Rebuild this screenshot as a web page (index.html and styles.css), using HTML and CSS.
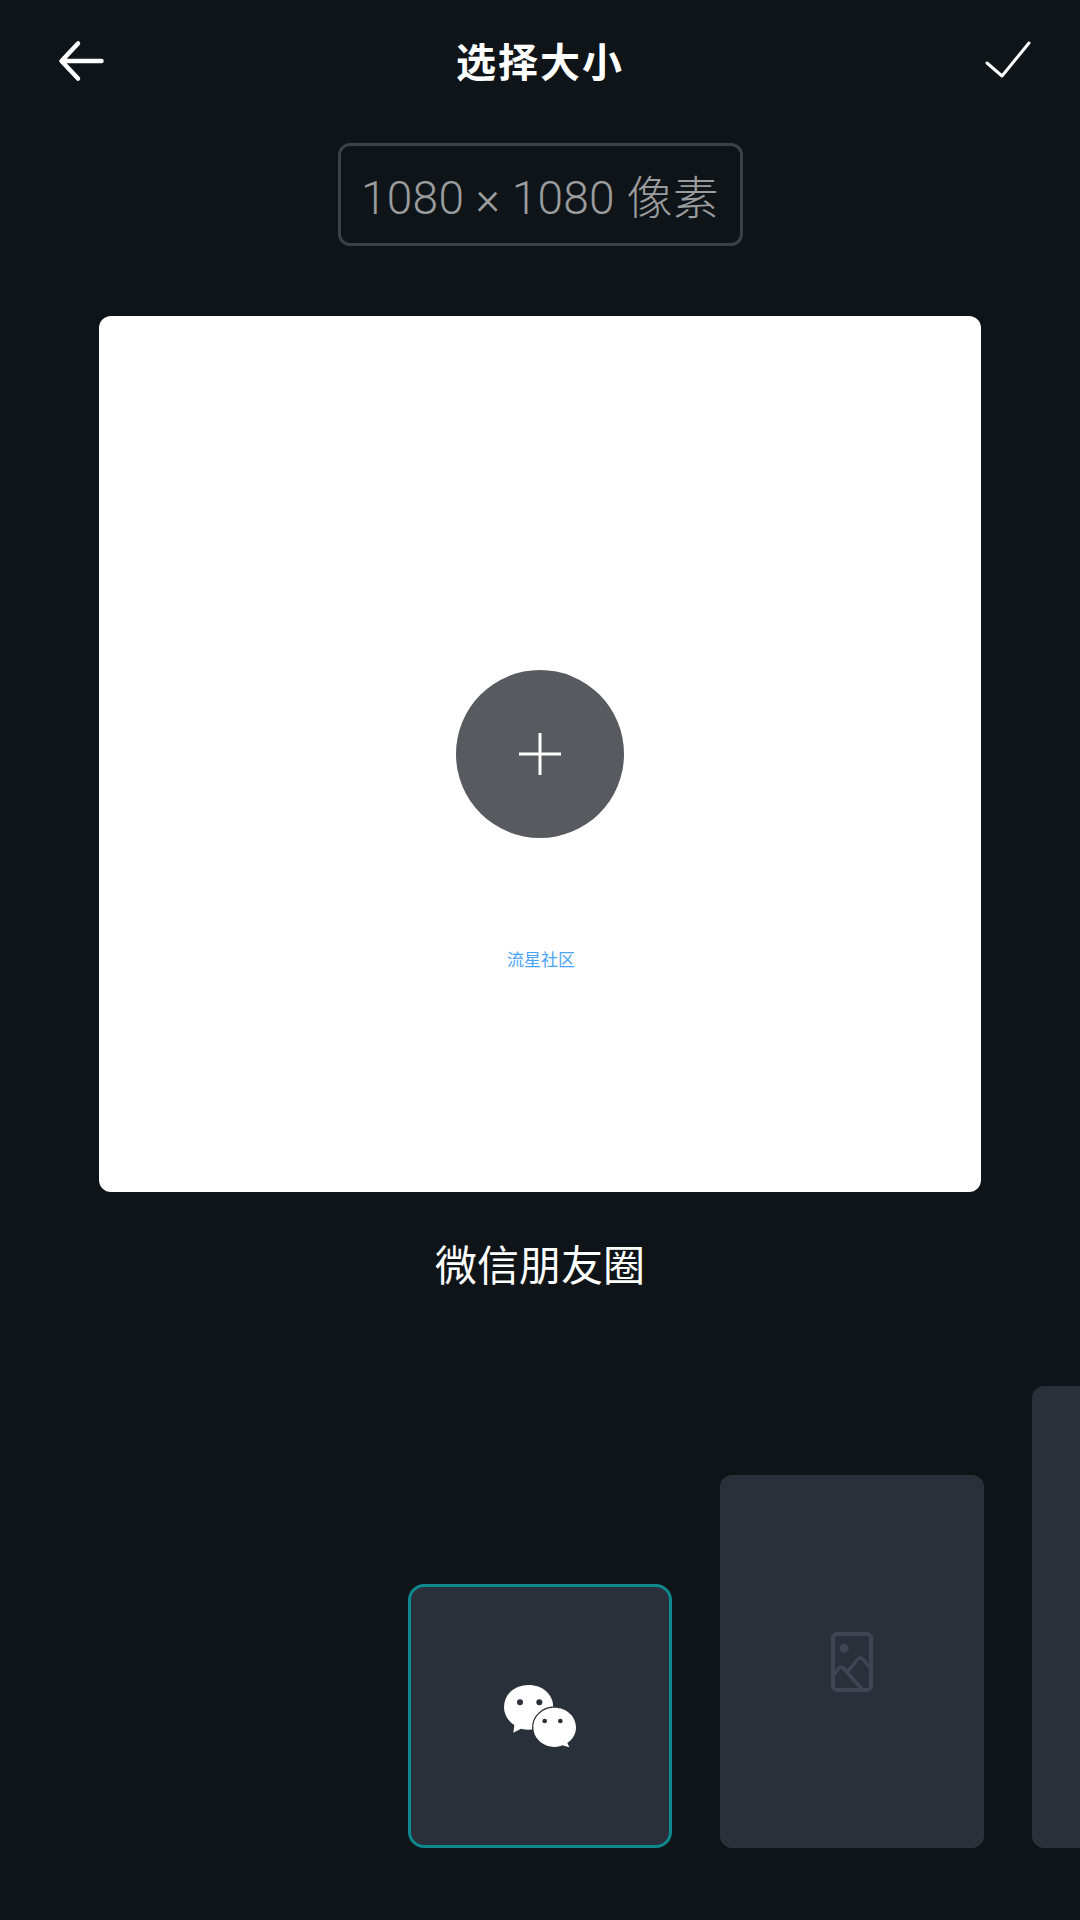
FILE: index.html
```html
<!DOCTYPE html>
<html lang="zh-CN">
<head>
  <meta charset="UTF-8">
  <meta name="viewport" content="width=device-width, initial-scale=1.0">
  <title>选择大小</title>
  <link rel="stylesheet" href="styles.css">
</head>
<body>
  <header class="top-bar">
    <svg class="top-icon back-icon" viewBox="0 0 48 48">
      <path d="M43.500 23H4M20 5.500L3.500 23L20 40.500" />
    </svg>
    <h1 class="title">选择大小</h1>
    <svg class="top-icon done-icon" viewBox="0 0 48 48">
      <path d="M3 25L18 38L45 5" />
    </svg>
  </header>

  <div class="size-box">1080 × 1080 像素</div>

  <div class="canvas">
    <div class="add-btn">
      <svg class="plus-icon" viewBox="0 0 42 42">
        <path d="M0 21H42M21 0V42" />
      </svg>
    </div>
    <div class="watermark">流星社区</div>
  </div>

  <div class="ratio-name">微信朋友圈</div>

  <!-- 尺寸列表 -->
  <div class="ratio-list">
    <div class="ratio-item square selected">
      <svg class="wechat-icon" viewBox="0 3 300 270">
        <path class="bubble" d="M42 112C42 72 75 45 116 45C157 45 190 72 190 112C190 152 157 179 116 179C108 179 100 178 93 176L70 188L73 165C54 153 42 134 42 112Z" />
        <circle class="eye" cx="90" cy="97" r="9" />
        <circle class="eye" cx="148" cy="97" r="9" />
        <path class="bubble front" d="M130 172C130 139 159 113 194 113C229 113 258 139 258 172C258 192 248 209 232 219L238 232L217 226C210 229 202 231 194 231C159 231 130 205 130 172Z" />
        <circle class="eye" cx="164" cy="153" r="7" />
        <circle class="eye" cx="211" cy="153" r="7" />
      </svg>
    </div>
    <div class="ratio-item portrait">
      <svg class="image-icon" viewBox="0 0 42 60">
        <rect x="2" y="2" width="38" height="56" rx="4" />
        <circle cx="13.300" cy="16.300" r="4.500" />
        <path d="M3.500 42L8 36Q10 34 12 36L30.500 56.500M17.300 38.700L27 27Q29.500 24.500 32 27L39.700 36.300" />
      </svg>
    </div>
    <div class="ratio-item tall"></div>
  </div>
</body>
</html>
```

FILE: styles.css
```css
* {
  box-sizing: border-box;
}
body {
  margin: 0;
  width: 1080px;
  height: 1920px;
  overflow: hidden;
  background-color: #0e1418;
  font-family: "Noto Sans CJK SC", sans-serif;
  display: flex;
  flex-direction: column;
  align-items: center;
}

/* top bar */
.top-bar {
  width: 100%;
  height: 124px;
  padding: 0 48px;
  display: grid;
  grid-template-columns: 1fr auto 1fr;
  align-items: center;
}
.top-icon {
  width: 48px;
  height: 48px;
  fill: none;
  stroke: #fff;
  stroke-linecap: round;
  stroke-linejoin: round;
}
.back-icon {
  margin-left: 10px;
  stroke-width: 4.5;
}
.done-icon {
  stroke-width: 3;
  justify-self: end;
}
.title {
  margin: 0 0 4px;
  color: #fff;
  font-size: 40px;
  font-weight: 700;
  letter-spacing: 2px;
  line-height: 1;
}

.size-box {
  margin-top: 19px;
  width: 405px;
  height: 103px;
  padding-bottom: 2px;
  border: 3px solid #3d4145;
  border-radius: 12px;
  display: flex;
  justify-content: center;
  align-items: center;
  color: #9a9c9e;
  font-family: Roboto, "Noto Sans CJK SC", sans-serif;
  font-size: 46px;
  font-weight: 300;
  letter-spacing: 0.300px;
  white-space: nowrap;
}

/* white canvas */
.canvas {
  margin-top: 70px;
  width: 882px;
  height: 876px;
  padding-top: 354px;
  background-color: #fff;
  border-radius: 12px;
  display: flex;
  flex-direction: column;
  align-items: center;
}
.add-btn {
  width: 168px;
  height: 168px;
  border-radius: 50%;
  background-color: #585a5f;
  display: flex;
  justify-content: center;
  align-items: center;
}
.plus-icon {
  width: 42px;
  height: 42px;
  stroke: #fff;
  stroke-width: 3;
}
.watermark {
  margin: 109px 0 0 2px;
  color: #4ba3f5;
  font-size: 17px;
  line-height: 24px;
}

.ratio-name {
  margin-top: 43px;
  color: #fff;
  font-size: 42px;
  line-height: 56px;
}

/* ratio list */
.ratio-list {
  margin-top: auto;
  width: 100%;
  padding: 0 0 72px 408px;
  overflow: hidden;
  display: flex;
  align-items: flex-end;
  gap: 48px;
}
.ratio-item {
  flex: none;
  width: 264px;
  background-color: #2a303a;
  border-radius: 12px;
  display: flex;
  justify-content: center;
  align-items: center;
}
.square {
  height: 264px;
}
.portrait {
  height: 373px;
}
.tall {
  height: 462px;
}
.selected {
  border: 3px solid #0e8a8f;
  border-radius: 16px;
}
.wechat-icon {
  width: 100px;
  height: 90px;
}
.bubble {
  fill: #fff;
}
.front {
  stroke: #2a303a;
  stroke-width: 8;
  paint-order: stroke;
}
.eye {
  fill: #2a303a;
}
.image-icon {
  width: 42px;
  height: 60px;
  fill: none;
  stroke: #3f4551;
  stroke-width: 3.500;
  stroke-linecap: round;
  stroke-linejoin: round;
}
.image-icon rect {
  stroke-width: 4;
}
.image-icon circle {
  fill: #3f4551;
  stroke: none;
}
```
